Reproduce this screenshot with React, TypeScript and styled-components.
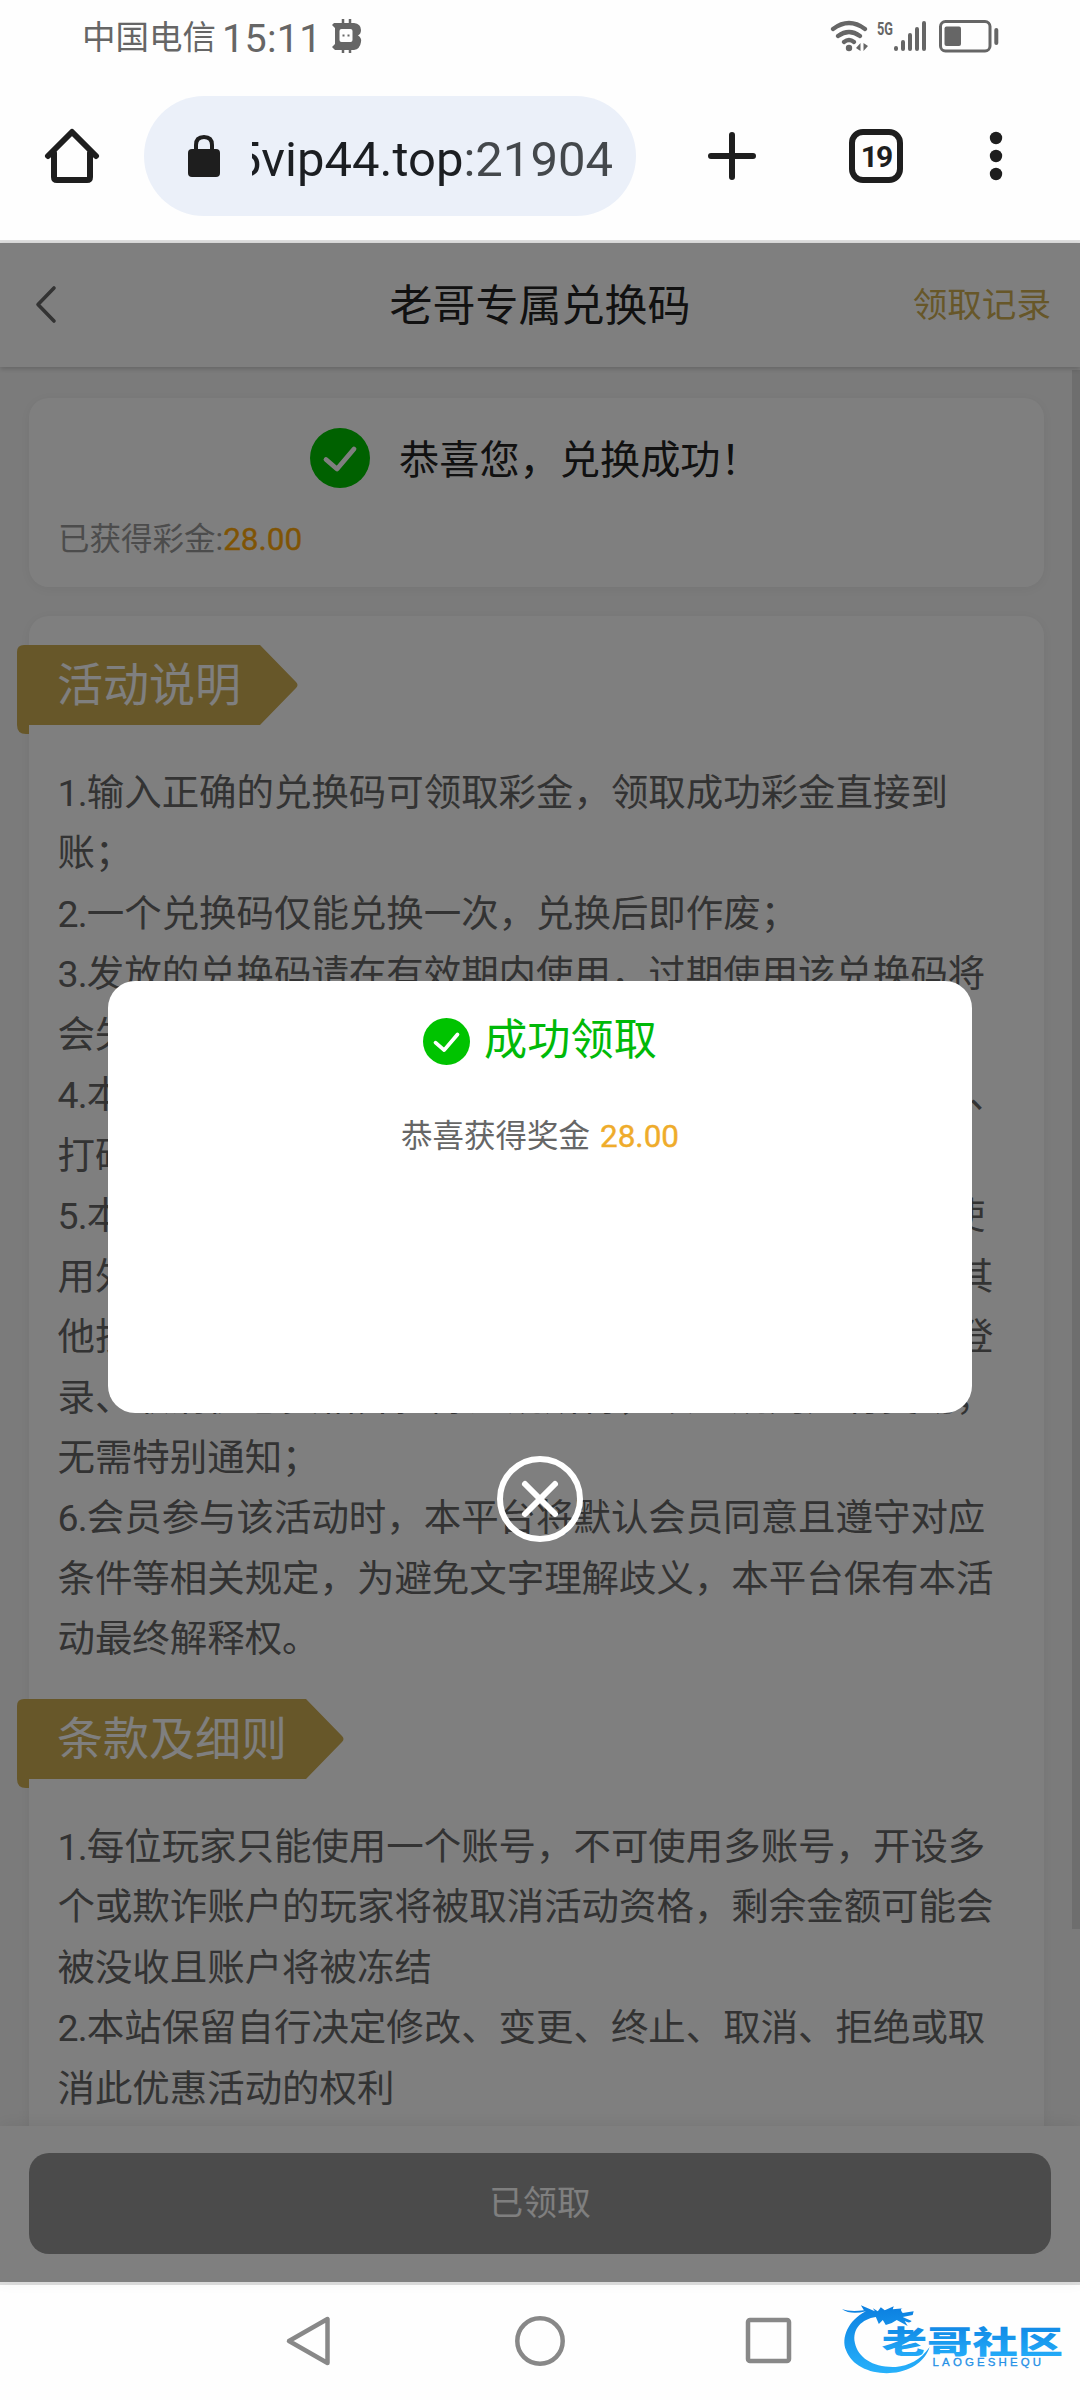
import React from 'react';
import styled, { createGlobalStyle } from 'styled-components';

const GlobalStyle = createGlobalStyle`
  * { box-sizing: border-box; }
  html, body { margin: 0; padding: 0; background: #fff; }
  body { font-family: Roboto, "Noto Sans CJK SC", sans-serif; }
`;

const gold = '#ceae52';

const Screen = styled.div`
  width: 1080px;
  height: 2400px;
  display: flex;
  flex-direction: column;
  overflow: hidden;
  background: #fefefe;
`;

const StatusBar = styled.header`
  height: 72px;
  padding: 0 80px 0 82px;
  display: flex;
  justify-content: space-between;
  color: #666;
`;

const StatusGroup = styled.div`
  display: flex;
  align-items: center;
`;

const Carrier = styled.span`
  font-size: 33.5px;
  line-height: 40px;
  padding-top: 4px;
`;

const Clock = styled.span`
  font-size: 39.5px;
  line-height: 40px;
  padding-top: 5px;
  margin: 0 10px 0 6px;
  letter-spacing: 0.3px;
`;

const BrowserBar = styled.div`
  height: 168px;
  display: flex;
  align-items: center;
  padding: 0 77px 0 44px;
`;

const AddressPill = styled.div`
  width: 492px;
  height: 120px;
  margin: 0 70px 0 44px;
  border-radius: 60px;
  background: #ebf0f9;
  display: flex;
  align-items: center;
  padding: 0 23px 0 44px;
`;

const AddressClip = styled.div`
  margin-left: 32px;
  width: 361px;
  height: 70px;
  display: flex;
  justify-content: flex-end;
  overflow: hidden;
  white-space: nowrap;
  font-size: 49px;
  line-height: 77px;
  color: #1b1e22;
`;

const Port = styled.span`
  color: #44484c;
`;

const TabCount = styled.div`
  width: 54px;
  height: 54px;
  margin: 0 86px 0 91px;
  border: 6px solid #1e1e1e;
  border-radius: 14px;
  display: flex;
  align-items: center;
  justify-content: center;
  color: #1e1e1e;
  font-size: 30px;
  font-weight: 700;
  letter-spacing: -2px;
`;

const Strip = styled.div`
  height: 3px;
  flex: none;
  background: #dedede;
`;

const Page = styled.main`
  position: relative;
  height: 2039px;
  flex: none;
  display: flex;
  flex-direction: column;
  background: #f7f7f7;
`;

const PageHeader = styled.div`
  height: 124px;
  flex: none;
  display: grid;
  grid-template-columns: 200px 1fr 200px;
  align-items: center;
  padding: 0 29px 0 34px;
  background: #fff;
  box-shadow: 0 2px 5px rgba(0, 0, 0, 0.18);
  z-index: 1;
`;

const PageTitle = styled.h1`
  margin: 2px 0 0 -5px;
  text-align: center;
  font-size: 43px;
  font-weight: 400;
  line-height: 60px;
  color: #222;
`;

const HistoryLink = styled.a`
  text-align: right;
  font-size: 34.6px;
  line-height: 50px;
  color: ${gold};
`;

const Scroller = styled.div`
  height: 1759px;
  flex: none;
  display: flex;
  justify-content: space-between;
  overflow: hidden;
`;

const Cards = styled.div`
  width: 1044px;
  padding: 31px 0 0 29px;
  display: flex;
  flex-direction: column;
  gap: 29px;
`;

const ScrollThumb = styled.div`
  width: 8px;
  height: 1559px;
  margin-top: 3px;
  background: #dcdcdc;
`;

const Card = styled.section`
  border-radius: 20px;
  background: #fff;
  box-shadow: 0 2px 14px rgba(0, 0, 0, 0.06);
`;

const ResultCard = styled(Card)`
  height: 189px;
  flex: none;
  padding: 29px 29px 0 29px;
`;

const ResultTitle = styled.div`
  display: flex;
  align-items: center;
  height: 61px;
  padding-left: 252px;
  gap: 29px;
  font-size: 40.2px;
  line-height: 61px;
  color: #222;
`;

const ResultText = styled.span`
  padding-top: 5px;
`;

const ResultLine = styled.div`
  margin-top: 30px;
  font-size: 31.5px;
  line-height: 44px;
  color: #999;
`;

const Amount = styled.span<{ $modal?: boolean }>`
  color: ${(p) => (p.$modal ? '#efac2b' : '#ffa90a')};
  -webkit-text-stroke: 0.4px currentColor;
  ${(p) => (p.$modal ? 'margin-left: 10px;' : '')}
`;

const RulesCard = styled(Card)`
  flex: none;
  padding-top: 29px;
  height: 1600px;
`;

const RibbonBox = styled.div`
  display: grid;
  width: 330px;
  height: 89px;
  margin-left: -12px;
  > * { grid-area: 1 / 1; }
`;

const RibbonText = styled.h2`
  margin: 0;
  padding-left: 40px;
  font-size: 46px;
  font-weight: 400;
  line-height: 80px;
  color: #fff;
  z-index: 1;
`;

const Lines = styled.div<{ $gap: number }>`
  margin: 29px 0 ${(p) => p.$gap}px 28.5px;
  font-size: 37.45px;
  line-height: 60.45px;
  color: #666;
  white-space: nowrap;
`;

const Line = styled.p`
  margin: 0;
`;

const Marker = styled.span`
  letter-spacing: -0.8px;
`;

const ActionBar = styled.div`
  height: 156px;
  flex: none;
  padding: 27px 29px;
  background: #fff;
  box-shadow: 0 -2px 16px rgba(0, 0, 0, 0.07);
  z-index: 1;
`;

const ClaimButton = styled.button`
  width: 100%;
  height: 101px;
  border: 0;
  border-radius: 20px;
  padding: 0 0 6px;
  background: #979797;
  color: #fff;
  font: inherit;
  font-size: 33.8px;
`;

const Overlay = styled.div`
  position: absolute;
  inset: 0;
  z-index: 2;
  display: flex;
  flex-direction: column;
  align-items: center;
  padding-top: 738px;
  background: rgba(0, 0, 0, 0.5);
`;

const Dialog = styled.div`
  width: 864px;
  height: 432px;
  flex: none;
  border-radius: 27px;
  background: #fff;
  display: flex;
  flex-direction: column;
  align-items: center;
  padding-top: 30px;
`;

const DialogTitle = styled.div`
  display: flex;
  align-items: center;
  gap: 14px;
  height: 60px;
  font-size: 43.2px;
  line-height: 62px;
  color: #00b908;
`;

const DialogText = styled.div`
  margin-top: 42px;
  font-size: 31.5px;
  line-height: 47px;
  color: #666;
`;

const CloseButton = styled.button`
  margin-top: 43px;
  padding: 0;
  border: 0;
  background: none;
  display: flex;
`;

const NavBar = styled.nav`
  flex: 1;
  display: flex;
  align-items: flex-start;
  padding: 15px 17px 0 284px;
`;

const NavIcon = styled.svg<{ $right: number }>`
  width: 50px;
  height: 66px;
  flex: none;
  margin: 8px ${(p) => p.$right}px 0 0;
`;

const CheckBadge = ({ size }: { size: number }) => (
  <svg width={size} height={size} viewBox="0 0 60 60">
    <circle cx="30" cy="30" r="30" fill="#00c300" />
    <path d="M16 31.500L27 41L44 21" fill="none" stroke="#fff" strokeWidth="4.800" strokeLinecap="round" strokeLinejoin="round" />
  </svg>
);

const Ribbon = ({ title, body }: { title: string; body: number }) => (
  <RibbonBox>
    <svg width="330" height="89" viewBox="0 0 330 89" fill={gold}>
      <path d={`M7 0H${body}L${body + 36} 37Q${body + 39} 40 ${body + 36} 43L${body} 80H12V89H9Q0 89 0 80V7Q0 0 7 0Z`} />
    </svg>
    <RibbonText>{title}</RibbonText>
  </RibbonBox>
);

const activityLines = [
  '1.输入正确的兑换码可领取彩金，领取成功彩金直接到',
  '账；',
  '2.一个兑换码仅能兑换一次，兑换后即作废；',
  '3.发放的兑换码请在有效期内使用，过期使用该兑换码将',
  '会失效；',
  '4.本活动所赠彩金需完成1倍流水才可提款，如遇有套利、',
  '打码违规将取消资格；',
  '5.本优惠仅限本人账号参与，每位会员只能享受一次，使',
  '用外挂程序、机器人、恶意套利、多账号对打或者利用其',
  '他技术手段参与本活动，本平台有权冻结账号并禁止其登',
  '录、取消优惠资格并扣除违规所得，以上规则如有变动，',
  '无需特别通知；',
  '6.会员参与该活动时，本平台将默认会员同意且遵守对应',
  '条件等相关规定，为避免文字理解歧义，本平台保有本活',
  '动最终解释权。',
];

const termLines = [
  '1.每位玩家只能使用一个账号，不可使用多账号，开设多',
  '个或欺诈账户的玩家将被取消活动资格，剩余金额可能会',
  '被没收且账户将被冻结',
  '2.本站保留自行决定修改、变更、终止、取消、拒绝或取',
  '消此优惠活动的权利',
];

const TextLine = ({ text }: { text: string }) => {
  const marker = /^\d\./.test(text) ? text.slice(0, 2) : '';
  return (
    <Line>
      {marker && <Marker>{marker}</Marker>}
      {text.slice(marker.length)}
    </Line>
  );
};

const StatusIcons = () => (
  <svg width="170" height="38" viewBox="830 17 170 38" fill="none" stroke="#666" strokeLinecap="round">
    <path d="M833 29Q849 17 865 29M838 36Q849 28 860 36M844 42Q849 38 854 42" strokeWidth="4.200" />
    <circle cx="849" cy="48" r="3.200" fill="#666" stroke="none" />
    <path d="M860.500 43V51L856 48ZM863.500 43V51L868 46Z" fill="#666" stroke="none" />
    <text x="877" y="34.500" fontSize="19" fontWeight="700" fill="#666" stroke="none" textLength="16" lengthAdjust="spacingAndGlyphs">5G</text>
    <path d="M896 49V48M903 49V42M910 49V35M917 49V29M924 49V23" strokeWidth="4" />
    <rect x="940.500" y="21.500" width="49.500" height="29.500" rx="5" strokeWidth="3" />
    <rect x="944.500" y="26.500" width="16.500" height="19.500" rx="2" fill="#666" stroke="none" />
    <path d="M996.300 30V43" strokeWidth="4" />
  </svg>
);

const RobotIcon = () => (
  <svg width="30" height="34" viewBox="0 0 30 34">
    <path d="M2 4H22Q29 5 29 11Q29 15 26 16.500Q30 19 29 23Q28 30 22 31H3L0 28L3 25V9L0 6Z" fill="#666" />
    <path d="M11 0V5M18 0V5M11 29V34M18 29V34" stroke="#666" strokeWidth="2.500" />
    <rect x="7.500" y="10" width="13" height="13" rx="2" fill="#fefefe" />
    <path d="M11.500 15.500V17.500M16.500 15.500V17.500" stroke="#666" strokeWidth="2" />
  </svg>
);

const Logo = () => (
  <svg width="226" height="80" viewBox="838 2300 226 80">
    <defs>
      <linearGradient id="blue" x1="0" y1="0" x2="0" y2="1">
        <stop offset="0" stopColor="#0b7fe0" />
        <stop offset="1" stopColor="#27b1fb" />
      </linearGradient>
    </defs>
    <path d="M866 2311C848 2320 841 2338 846 2350C852 2367 873 2375 893 2373C913 2371 926 2360 930 2347C921 2360 909 2366 896 2367C874 2368 858 2358 855 2343C852 2329 862 2319 876 2317L879 2324L883 2320L886 2325L892 2323L897 2320L908 2326L905 2321Q910 2324 912 2321L903 2317L913 2315L914 2311L903 2313Q899 2308 904 2308L893 2309L894 2306L885 2310L881 2307L878 2311L873 2308L875 2311L861 2305L864 2310Q851 2312 842 2309Q851 2315 866 2311Z" fill="url(#blue)" />
    <text x="882" y="2353" fontFamily="Noto Sans CJK SC, sans-serif" fontSize="31" fontWeight="900" fill="url(#blue)" textLength="182" lengthAdjust="spacingAndGlyphs">老哥社区</text>
    <text x="933" y="2366" fontFamily="Liberation Sans, sans-serif" fontSize="11.500" fill="#2590e6" stroke="#2590e6" strokeWidth="0.300" textLength="109">LAOGESHEQU</text>
  </svg>
);

export default function App() {
  return (
    <Screen lang="zh-CN">
      <GlobalStyle />
      <StatusBar>
        <StatusGroup>
          <Carrier>中国电信</Carrier>
          <Clock>15:11</Clock>
          <RobotIcon />
        </StatusGroup>
        <StatusGroup>
          <StatusIcons />
        </StatusGroup>
      </StatusBar>
      <BrowserBar>
        <svg width="56" height="56" viewBox="0 0 56 56" fill="none" stroke="#1e1e1e" strokeWidth="6" strokeLinecap="round" strokeLinejoin="round">
          <path d="M4 28L28 4L52 28M10 25V49Q10 52 13 52H43Q46 52 46 49V25" />
        </svg>
        <AddressPill>
          <svg width="32" height="44" viewBox="0 0 32 44">
            <rect x="0" y="15" width="32" height="28" rx="4" fill="#1e1e1e" />
            <path d="M8 16V11Q8 3 16 3Q24 3 24 11V16" fill="none" stroke="#1e1e1e" strokeWidth="4" />
          </svg>
          <AddressClip>
            <span>5vip44.top<Port>:21904</Port></span>
          </AddressClip>
        </AddressPill>
        <svg width="52" height="52" viewBox="0 0 52 52" stroke="#1e1e1e" strokeWidth="6" strokeLinecap="round">
          <path d="M26 5V47M5 26H47" />
        </svg>
        <TabCount>19</TabCount>
        <svg width="14" height="50" viewBox="0 0 14 50" fill="#1e1e1e">
          <circle cx="7" cy="7" r="6.200" />
          <circle cx="7" cy="25" r="6.200" />
          <circle cx="7" cy="43" r="6.200" />
        </svg>
      </BrowserBar>
      <Strip />
      <Page>
        <PageHeader>
          <svg width="24" height="40" viewBox="0 0 24 40" fill="none" stroke="#666" strokeWidth="3.600" strokeLinecap="round" strokeLinejoin="round">
            <path d="M20 3L4 19.500L20 36" />
          </svg>
          <PageTitle>老哥专属兑换码</PageTitle>
          <HistoryLink>领取记录</HistoryLink>
        </PageHeader>
        <Scroller>
          <Cards>
            <ResultCard>
              <ResultTitle>
                <CheckBadge size={60} />
                <ResultText>恭喜您，兑换成功！</ResultText>
              </ResultTitle>
              <ResultLine>
                已获得彩金:<Amount>28.00</Amount>
              </ResultLine>
            </ResultCard>
            <RulesCard>
              <Ribbon title="活动说明" body={243} />
              <Lines $gap={29}>
                {activityLines.map((line) => <TextLine key={line} text={line} />)}
              </Lines>
              <Ribbon title="条款及细则" body={289} />
              <Lines $gap={0}>
                {termLines.map((line) => <TextLine key={line} text={line} />)}
              </Lines>
            </RulesCard>
          </Cards>
          <ScrollThumb />
        </Scroller>
        <ActionBar>
          <ClaimButton>已领取</ClaimButton>
        </ActionBar>
        <Overlay>
          <Dialog>
            <DialogTitle>
              <CheckBadge size={47} />
              成功领取
            </DialogTitle>
            <DialogText>
              恭喜获得奖金<Amount $modal>28.00</Amount>
            </DialogText>
          </Dialog>
          <CloseButton aria-label="关闭">
            <svg width="86" height="86" viewBox="0 0 86 86" fill="none" stroke="#fff" strokeWidth="6" strokeLinecap="round">
              <circle cx="43" cy="43" r="40" />
              <path d="M28 28L58 58M58 28L28 58" />
            </svg>
          </CloseButton>
        </Overlay>
      </Page>
      <Strip />
      <NavBar>
        <NavIcon $right={181} viewBox="0 0 50 66" fill="none" stroke="#888" strokeWidth="4.500" strokeLinejoin="round">
          <path d="M43.500 11V55L5 33Z" />
        </NavIcon>
        <NavIcon $right={178} viewBox="0 0 50 66" fill="none" stroke="#888" strokeWidth="4.500">
          <circle cx="25" cy="33" r="22.700" />
        </NavIcon>
        <NavIcon $right={45} viewBox="0 0 50 66" fill="none" stroke="#888" strokeWidth="4.500">
          <rect x="5" y="12" width="41" height="41" rx="2" />
        </NavIcon>
        <Logo />
      </NavBar>
    </Screen>
  );
}
